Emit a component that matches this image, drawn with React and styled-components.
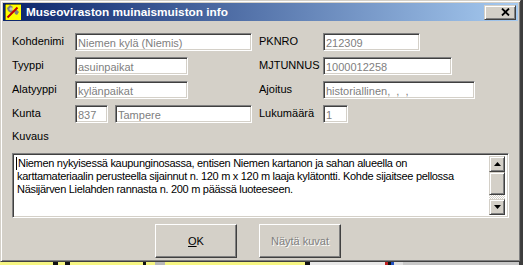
import styled, { createGlobalStyle } from 'styled-components';

const GlobalStyle = createGlobalStyle`
  html, body {
    margin: 0;
    padding: 0;
  }
  body {
    background: #3c3c3c;
    font-family: "Liberation Sans", Arial, sans-serif;
  }
`;

const ROWS = [
  {
    left: { label: 'Kohdenimi', inputs: [{ value: 'Niemen kylä (Niemis)', width: 177 }] },
    right: { label: 'PKNRO', inputs: [{ value: '212309', width: 97 }] },
  },
  {
    left: { label: 'Tyyppi', inputs: [{ value: 'asuinpaikat', width: 113 }] },
    right: { label: 'MJTUNNUS', inputs: [{ value: '1000012258', width: 129 }] },
  },
  {
    left: { label: 'Alatyyppi', inputs: [{ value: 'kylänpaikat', width: 113 }] },
    right: { label: 'Ajoitus', inputs: [{ value: 'historiallinen,  ,  ,', width: 152 }] },
  },
  {
    left: {
      label: 'Kunta',
      inputs: [
        { value: '837', width: 33 },
        { value: 'Tampere', width: 137 },
      ],
    },
    right: { label: 'Lukumäärä', inputs: [{ value: '1', width: 25 }] },
  },
];

const DESCRIPTION = [
  'Niemen nykyisessä kaupunginosassa, entisen Niemen kartanon ja sahan alueella on',
  'karttamateriaalin perusteella sijainnut n. 120 m x 120 m laaja kylätontti. Kohde sijaitsee pellossa',
  'Näsijärven Lielahden rannasta n. 200 m päässä luoteeseen.',
];

const STRIP = [
  ['#f6f682', 53], ['#111', 5], ['#f6f682', 7], ['#111', 5], ['#f6f682', 73],
  ['#111', 3], ['#f6f682', 9], ['#b8b8b8', 10], ['#f6f682', 140], ['#111', 5],
  ['#e8e8e8', 75], ['#c02020', 3], ['#111', 3], ['#2050c0', 3], ['#e0e0e0', 9],
  ['#c8c8c8', 116], ['#3c3c3c', 4],
];

const AppIcon = () => (
  <svg width="16" height="16" viewBox="0 0 16 16">
    <rect x="0" y="0" width="16" height="16" fill="#ffff00" />
    <path d="M0 0H16M0 0V16" stroke="#000" strokeWidth="1" />
    <polygon points="2,4 5,1 8,3 6,5 8,7 6,9 3,7" fill="#808080" />
    <polygon points="9,7 11,5 14,8 12,11 10,10" fill="#808080" />
    <polygon points="4,5 6,3 8,5 6,7" fill="#c0c0c0" />
    <line x1="2.5" y1="13.5" x2="12.5" y2="3.5" stroke="#c00000" strokeWidth="2" />
  </svg>
);

const CloseGlyph = () => (
  <svg width="9" height="8" viewBox="0 0 9 8">
    <path d="M1 0.5L8 7.5M8 0.5L1 7.5" stroke="#000" strokeWidth="1.8" />
  </svg>
);

const Arrow = ({ $down }) => (
  <svg width="7" height="4" viewBox="0 0 7 4">
    <polygon points={$down ? '0,0 7,0 3.5,4' : '0,4 7,4 3.5,0'} fill="#000" />
  </svg>
);

const App = () => {
  return (
    <>
      <GlobalStyle />
      <Desktop>
        <Window>
          <TitleBar>
            <AppIcon />
            <Caption>Museoviraston muinaismuiston info</Caption>
            <CloseButton>
              <CloseGlyph />
            </CloseButton>
          </TitleBar>
          <Content>
            <FieldGrid>
              {ROWS.map((row) => (
                <Row key={row.left.label}>
                  {[row.left, row.right].map((side) => (
                    <Pair key={side.label}>
                      <Label $side={side === row.left ? 'left' : 'right'}>{side.label}</Label>
                      <Inputs>
                        {side.inputs.map((input) => (
                          <TextInput key={input.value} $width={input.width}>
                            {input.value}
                          </TextInput>
                        ))}
                      </Inputs>
                    </Pair>
                  ))}
                </Row>
              ))}
            </FieldGrid>
            <DescLabel>Kuvaus</DescLabel>
            <MemoBox>
              <MemoText>
                {DESCRIPTION.map((line, i) => (
                  <MemoLine key={i}>
                    {i === 0 && <Caret />}
                    {line}
                  </MemoLine>
                ))}
              </MemoText>
              <ScrollBar>
                <ScrollButton>
                  <Arrow />
                </ScrollButton>
                <Thumb />
                <Track />
                <ScrollButton>
                  <Arrow $down />
                </ScrollButton>
              </ScrollBar>
            </MemoBox>
            <ButtonRow>
              <PushButton>
                <u>O</u>K
              </PushButton>
              <PushButton $disabled>Näytä kuvat</PushButton>
            </ButtonRow>
          </Content>
        </Window>
        <Strip>
          {STRIP.map(([color, width], i) => (
            <StripSegment key={i} $color={color} $width={width} />
          ))}
        </Strip>
      </Desktop>
    </>
  );
};

const Desktop = styled.div`
	width: 523px;
	height: 265px;
	display: flex;
	flex-direction: column;
	overflow: hidden;
`;

const Window = styled.div`
	width: 521px;
	height: 262px;
	box-sizing: border-box;
	background: #d4d0c8;
	border: 1px solid;
	border-color: #d4d0c8 #404040 #404040 #d4d0c8;
	box-shadow: inset 1px 1px #ffffff, inset -1px -1px #808080;
	padding: 2px;
	display: flex;
	flex-direction: column;
	font-size: 11px;
	color: #000;
`;

const TitleBar = styled.div`
	height: 18px;
	display: flex;
	align-items: center;
	padding: 0 2px 0 2px;
	gap: 5px;
	background: linear-gradient(to right, #0a246a, #a6caf0);
	svg {
		flex: none;
	}
`;

const Caption = styled.div`
	flex: 1;
	color: #fff;
	font-weight: bold;
	font-size: 11.8px;
	white-space: nowrap;
`;

const CloseButton = styled.div`
	width: 32px;
	height: 15px;
	box-sizing: border-box;
	background: #d4d0c8;
	border: 1px solid;
	border-color: #d4d0c8 #404040 #404040 #d4d0c8;
	box-shadow: inset 1px 1px #ffffff, inset -1px -1px #808080;
	display: flex;
	align-items: center;
	justify-content: center;
	padding-left: 10px;
`;

const Content = styled.div`
	flex: 1;
	padding: 12px 0 0 9px;
	display: flex;
	flex-direction: column;
`;

const FieldGrid = styled.div`
	display: flex;
	flex-direction: column;
	gap: 6px;
`;

const Row = styled.div`
	display: flex;
	height: 18px;
`;

const Pair = styled.div`
	display: flex;
	align-items: center;
	&:first-child {
		width: 247px;
	}
`;

const Label = styled.div`
	width: ${(p) => (p.$side === 'left' ? 63 : 64)}px;
	flex: none;
	white-space: nowrap;
	margin-top: -2px;
`;

const Inputs = styled.div`
	display: flex;
	gap: 7px;
`;

const TextInput = styled.div`
	width: ${(p) => p.$width}px;
	height: 18px;
	box-sizing: border-box;
	background: #fff;
	border: 1px solid;
	border-color: #808080 #ffffff #ffffff #808080;
	box-shadow: inset 1px 1px #404040, inset -1px -1px #d4d0c8;
	padding: 2px 0 0 2px;
	line-height: 14px;
	color: #808080;
	white-space: pre;
	overflow: hidden;
`;

const DescLabel = styled.div`
	margin-top: 7px;
	line-height: 13px;
`;

const MemoBox = styled.div`
	margin-top: 10px;
	width: 497px;
	height: 65px;
	box-sizing: border-box;
	background: #fff;
	border: 1px solid;
	border-color: #808080 #ffffff #ffffff #808080;
	box-shadow: inset 1px 1px #404040, inset -1px -1px #d4d0c8;
	padding: 2px;
	display: flex;
`;

const MemoText = styled.div`
	flex: 1;
	padding: 1px 0 0 2px;
	line-height: 13px;
	letter-spacing: -0.3px;
	white-space: nowrap;
	overflow: hidden;
`;

const MemoLine = styled.div`
	display: flex;
	align-items: center;
`;

const Caret = styled.span`
	width: 1px;
	height: 13px;
	background: #000;
	margin-left: -1px;
	margin-right: 1px;
`;

const ScrollBar = styled.div`
	width: 16px;
	display: flex;
	flex-direction: column;
	margin-right: 1px;
`;

const ScrollButton = styled.div`
	height: 16px;
	box-sizing: border-box;
	background: #d4d0c8;
	border: 1px solid;
	border-color: #d4d0c8 #404040 #404040 #d4d0c8;
	box-shadow: inset 1px 1px #ffffff, inset -1px -1px #808080;
	display: flex;
	align-items: center;
	justify-content: center;
`;

const Thumb = styled(ScrollButton)`
	height: 23px;
`;

const Track = styled.div`
	flex: 1;
	background: repeating-conic-gradient(#ffffff 0 25%, #d4d0c8 0 50%) 0 0 / 2px 2px;
`;

const ButtonRow = styled.div`
	margin-top: 6px;
	padding-left: 143px;
	display: flex;
	gap: 22px;
`;

const PushButton = styled.div`
	width: 82px;
	height: 34px;
	box-sizing: border-box;
	background: #d4d0c8;
	border: 1px solid;
	border-color: #ffffff #404040 #404040 #ffffff;
	box-shadow: inset -1px -1px #808080;
	display: flex;
	align-items: center;
	justify-content: center;
	color: ${(p) => (p.$disabled ? '#808080' : '#000')};
	text-shadow: ${(p) => (p.$disabled ? '1px 1px #ffffff' : 'none')};
`;

const Strip = styled.div`
	display: flex;
	height: 3px;
`;

const StripSegment = styled.div`
	width: ${(p) => p.$width}px;
	background: ${(p) => p.$color};
	flex: none;
`;

export default App;
